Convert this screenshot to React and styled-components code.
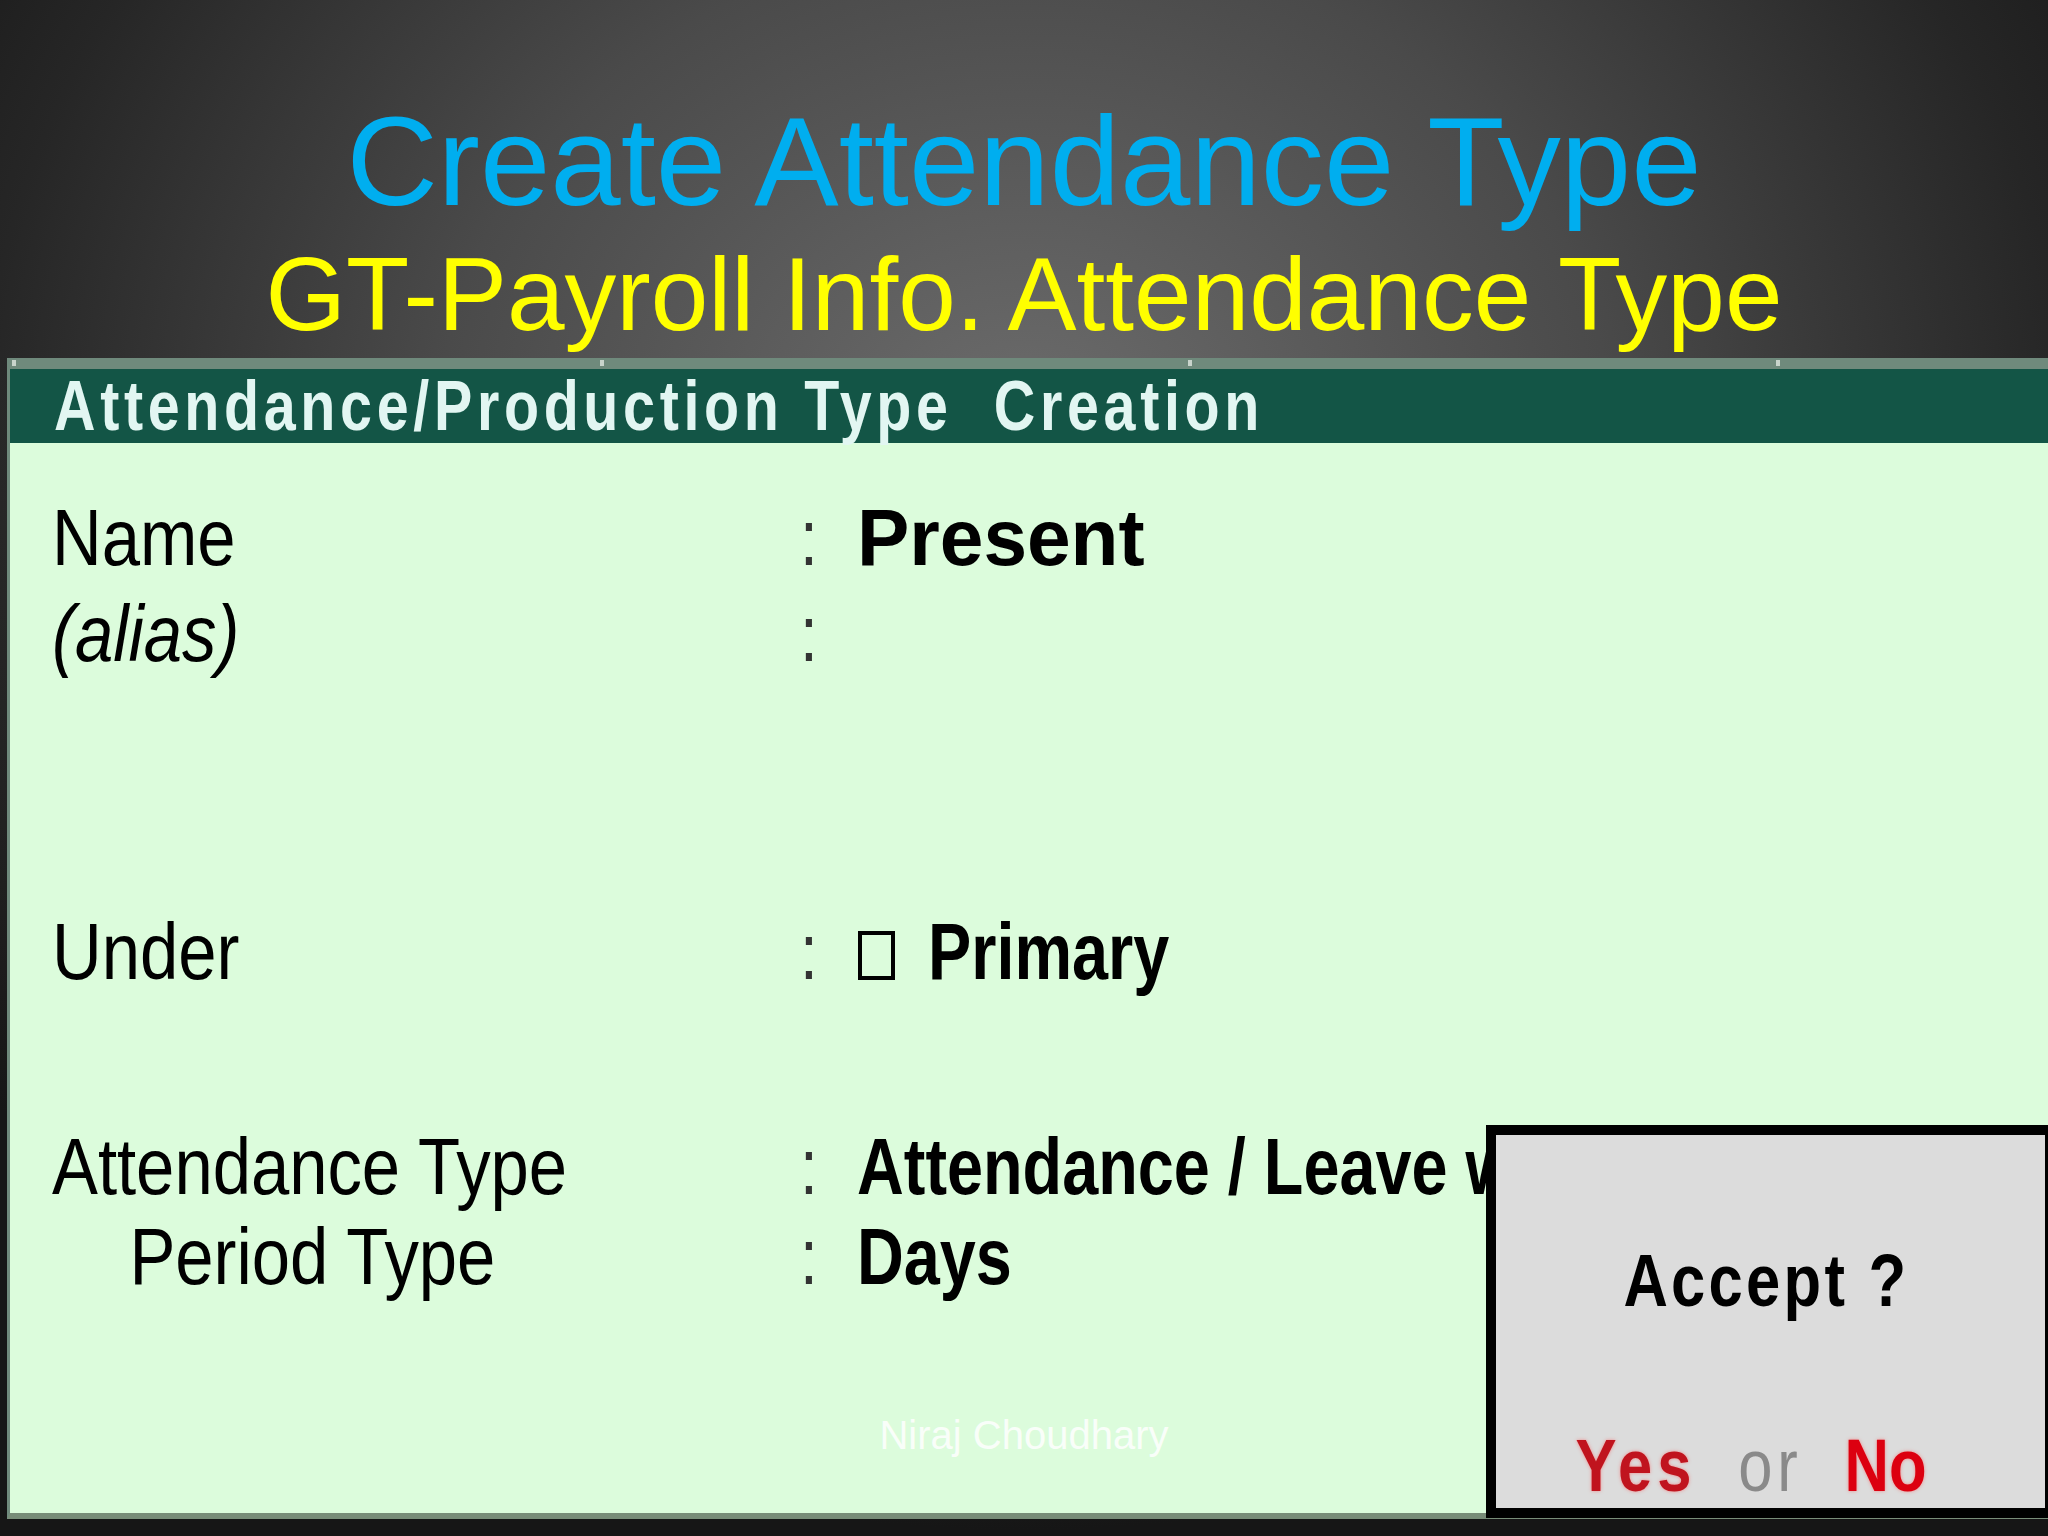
import { createGlobalStyle } from "styled-components";
import styled from "styled-components";

const GlobalStyle = createGlobalStyle`
  html, body {
    margin: 0;
    padding: 0;
    background: #1c1c1c;
  }
`;

// Tally-style form rows; "top" is the gap above the row in px
const fields = [
  { label: "Name", value: "Present", top: 0, sx: 0.98 },
  { label: "(alias)", value: "", top: 6, italic: true },
  { label: "Under", value: "Primary", top: 228, box: true },
  { label: "Attendance Type", value: "Attendance / Leave with Pay", top: 125 },
  { label: "Period Type", value: "Days", top: 0, indent: true },
];

function App() {
  return (
    <>
      <GlobalStyle />
      <Page>
        <Header>
          <Title>Create Attendance Type</Title>
          <SubTitle>GT-Payroll Info. Attendance Type</SubTitle>
        </Header>

        <Panel>
          <TopStrip>
            <Tick />
            <Tick />
            <Tick />
            <Tick />
          </TopStrip>
          <TitleBar>
            <BarText>Attendance/Production Type  Creation</BarText>
          </TitleBar>
          <Body>
            {fields.map((f) => (
              <Row key={f.label} $top={f.top}>
                <Label $italic={f.italic} $indent={f.indent}>
                  {f.label}
                </Label>
                <Colon>:</Colon>
                <Value>
                  {f.box && <Box />}
                  <ValueText $sx={f.sx}>{f.value}</ValueText>
                </Value>
              </Row>
            ))}
          </Body>
        </Panel>

        <Footer>Niraj Choudhary</Footer>

        <Dialog>
          <Question>Accept ?</Question>
          <Answers>
            <Yes>Yes</Yes>
            <Or>or</Or>
            <No>No</No>
          </Answers>
        </Dialog>
      </Page>
    </>
  );
}

export default App;

const Page = styled.div`
  position: relative;
  width: 2048px;
  height: 1536px;
  overflow: hidden;
  background: radial-gradient(
    ellipse 1300px 1100px at 50% 28%,
    #6c6c6c 0%,
    #4a4a4a 45%,
    #262626 80%,
    #161616 100%
  );
  font-family: "Liberation Sans", Arial, sans-serif;
`;

const Header = styled.div`
  height: 358px;
  box-sizing: border-box;
  padding-top: 98px;
  text-align: center;
`;

const Title = styled.div`
  font-size: 126.5px;
  line-height: 126px;
  color: #00aeef;
  margin-bottom: 19px;
  white-space: nowrap;
`;

const SubTitle = styled.div`
  font-size: 103.5px;
  line-height: 103px;
  color: #ffff00;
  white-space: nowrap;
`;

const Panel = styled.div`
  margin-left: 7px;
  height: 1161px;
  display: flex;
  flex-direction: column;
  border-left: 3px solid #6f8a7c;
  border-bottom: 6px solid #788c78;
  box-sizing: border-box;
`;

const TopStrip = styled.div`
  height: 11px;
  background: #6f8a7c;
  display: flex;
  justify-content: space-between;
  padding: 0 268px 0 2px;
`;

const Tick = styled.span`
  width: 4px;
  height: 6px;
  margin-top: 2px;
  background: #c8d4cc;
`;

const TitleBar = styled.div`
  height: 74px;
  background: #135546;
  padding-left: 44px;
`;

const BarText = styled.div`
  display: inline-block;
  color: #e2f6f2;
  font-weight: bold;
  font-size: 70px;
  line-height: 74px;
  letter-spacing: 5.7px;
  white-space: pre;
  transform: scaleX(0.82);
  transform-origin: left center;
`;

const Body = styled.div`
  flex: 1;
  background: #dcfcdc;
  padding: 50px 0 0 42px;
`;

const Row = styled.div`
  display: flex;
  height: 90px;
  line-height: 90px;
  margin-top: ${(p) => p.$top}px;
  font-size: 80px;
  color: #000;
  white-space: nowrap;
`;

const Label = styled.div`
  width: 748px;
  flex-shrink: 0;
  box-sizing: border-box;
  padding-left: ${(p) => (p.$indent ? 90 : 0)}px;
  font-style: ${(p) => (p.$italic ? "italic" : "normal")};
  transform: scaleX(0.86);
  transform-origin: left center;
`;

const Colon = styled.div`
  width: 57px;
  flex-shrink: 0;
  color: #333;
  transform: scaleX(0.8);
  transform-origin: left center;
`;

const Value = styled.div`
  display: flex;
  align-items: center;
  font-weight: bold;
`;

const ValueText = styled.span`
  display: inline-block;
  transform: scaleX(${(p) => p.$sx || 0.81});
  transform-origin: left center;
`;

const Box = styled.span`
  width: 29px;
  height: 41px;
  border: 4px solid #000;
  margin: 6px 33px 0 1px;
`;

const Footer = styled.div`
  position: absolute;
  left: 0;
  right: 0;
  top: 1415px;
  text-align: center;
  font-size: 40px;
  line-height: 40px;
  color: rgba(255, 255, 255, 0.85);
`;

const Dialog = styled.div`
  position: absolute;
  left: 1486px;
  top: 1125px;
  width: 569px;
  height: 393px;
  box-sizing: border-box;
  border: 10px solid #000;
  background: #dcdcdc;
  display: flex;
  flex-direction: column;
  align-items: center;
  padding-top: 108px;
  font-weight: bold;
  font-size: 75px;
  line-height: 75px;
`;

const Question = styled.div`
  color: #000;
  letter-spacing: 4px;
  margin: 0 0 110px -8px;
  transform: scaleX(0.82);
`;

const Answers = styled.div`
  display: flex;
  gap: 51px;
  margin-left: -40px;
  transform: scaleX(0.82);
`;

const Yes = styled.span`
  color: #c0141e;
  letter-spacing: 6px;
  text-shadow: 0 0 4px rgba(255, 80, 80, 0.6);
`;

const Or = styled.span`
  color: #8a8a8a;
  font-weight: normal;
  letter-spacing: 6px;
`;

const No = styled.span`
  color: #dc0010;
  text-shadow: 0 0 4px rgba(255, 80, 80, 0.6);
`;
